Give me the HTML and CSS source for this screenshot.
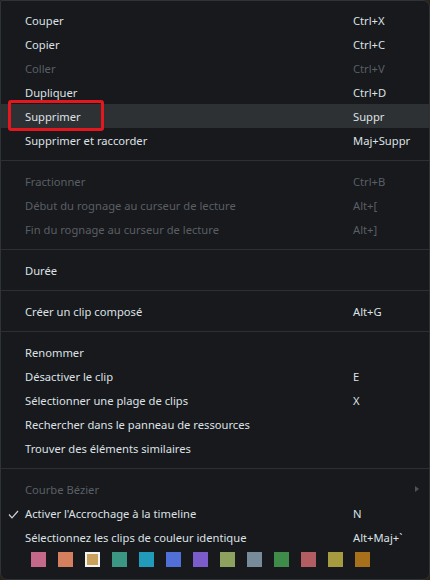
FILE: index.html
```html
<!DOCTYPE html>
<html lang="fr">
<head>
<meta charset="utf-8">
<link rel="stylesheet" href="styles.css">
</head>
<body>
<div class="menu">
  <div class="item"><span>Couper</span><span class="key">Ctrl+X</span></div>
  <div class="item"><span>Copier</span><span class="key">Ctrl+C</span></div>
  <div class="item disabled"><span>Coller</span><span class="key">Ctrl+V</span></div>
  <div class="item"><span>Dupliquer</span><span class="key">Ctrl+D</span></div>
  <div class="item hover"><span>Supprimer</span><span class="key">Suppr</span><div class="mark"></div></div>
  <div class="item"><span>Supprimer et raccorder</span><span class="key">Maj+Suppr</span></div>
  <div class="sep"></div>
  <div class="item disabled"><span>Fractionner</span><span class="key">Ctrl+B</span></div>
  <div class="item disabled"><span>Début du rognage au curseur de lecture</span><span class="key">Alt+[</span></div>
  <div class="item disabled"><span>Fin du rognage au curseur de lecture</span><span class="key">Alt+]</span></div>
  <div class="sep"></div>
  <div class="item"><span>Durée</span><span class="key"></span></div>
  <div class="sep"></div>
  <div class="item"><span>Créer un clip composé</span><span class="key">Alt+G</span></div>
  <div class="sep"></div>
  <div class="item"><span>Renommer</span><span class="key"></span></div>
  <div class="item"><span>Désactiver le clip</span><span class="key">E</span></div>
  <div class="item"><span>Sélectionner une plage de clips</span><span class="key">X</span></div>
  <div class="item"><span>Rechercher dans le panneau de ressources</span><span class="key"></span></div>
  <div class="item"><span>Trouver des éléments similaires</span><span class="key"></span></div>
  <div class="sep"></div>
  <div class="item disabled"><span>Courbe Bézier</span><span class="key"></span><span class="arrow"></span></div>
  <div class="item"><svg class="check" width="11" height="9" viewBox="0 0 11 9"><polyline points="1,4.5 4,7.8 10,1" fill="none" stroke="#cfd3d7" stroke-width="1.2"/></svg><span>Activer l'Accrochage à la timeline</span><span class="key">N</span></div>
  <div class="item"><span>Sélectionnez les clips de couleur identique</span><span class="key">Alt+Maj+`</span></div>
  <div class="swatches">
    <span class="sw c1"></span>
    <span class="sw c2"></span>
    <span class="sw c3 sel"></span>
    <span class="sw c4"></span>
    <span class="sw c5"></span>
    <span class="sw c6"></span>
    <span class="sw c7"></span>
    <span class="sw c8"></span>
    <span class="sw c9"></span>
    <span class="sw c10"></span>
    <span class="sw c11"></span>
    <span class="sw c12"></span>
    <span class="sw c13"></span>
  </div>
</div>
</body>
</html>
```
FILE: styles.css
```css
html, body {
  margin: 0;
  padding: 0;
  background: #2a2418;
}
body {
  width: 430px;
  height: 580px;
  overflow: hidden;
}
.menu {
  box-sizing: border-box;
  width: 430px;
  height: 580px;
  background: #17191c;
  border: 1px solid #2f3236;
  border-radius: 2px 7px 7px 7px;
  padding-top: 7px;
  font-family: "Noto Sans", "Open Sans", sans-serif;
  font-size: 11.2px;
  color: #dde1e5;
  position: relative;
}
.item {
  position: relative;
  display: grid;
  grid-template-columns: 1fr 76px;
  align-items: center;
  height: 24px;
  padding-left: 24px;
  white-space: nowrap;
}
.item.hover {
  background: #2e3134;
}
.item.disabled {
  color: #5a5f65;
}
.sep {
  height: 1px;
  margin: 8px 0;
  background: #2c2f33;
}
.mark {
  position: absolute;
  left: 7px;
  top: -4px;
  width: 90px;
  height: 25px;
  border: 3px solid #e4171f;
  border-radius: 3px;
}
.check {
  position: absolute;
  left: 7px;
  top: 9px;
}
.arrow {
  position: absolute;
  right: 10px;
  top: 9px;
  width: 0;
  height: 0;
  border-top: 3px solid transparent;
  border-bottom: 3px solid transparent;
  border-left: 4px solid #4f5358;
}
.swatches {
  display: flex;
  gap: 12px;
  padding: 3px 0 0 30px;
}
.sw {
  box-sizing: border-box;
  width: 15px;
  height: 15px;
}
.sw.sel {
  border: 2px solid #f2f2f2;
}
.c1 { background: #c4698a; }
.c2 { background: #d4805f; }
.c3 { background: #c9a15a; }
.c4 { background: #3c9684; }
.c5 { background: #229bbb; }
.c6 { background: #5070d8; }
.c7 { background: #7c5cca; }
.c8 { background: #8ea25f; }
.c9 { background: #788b9a; }
.c10 { background: #3f8b4a; }
.c11 { background: #b15d61; }
.c12 { background: #a69b3f; }
.c13 { background: #a8701b; }
```
